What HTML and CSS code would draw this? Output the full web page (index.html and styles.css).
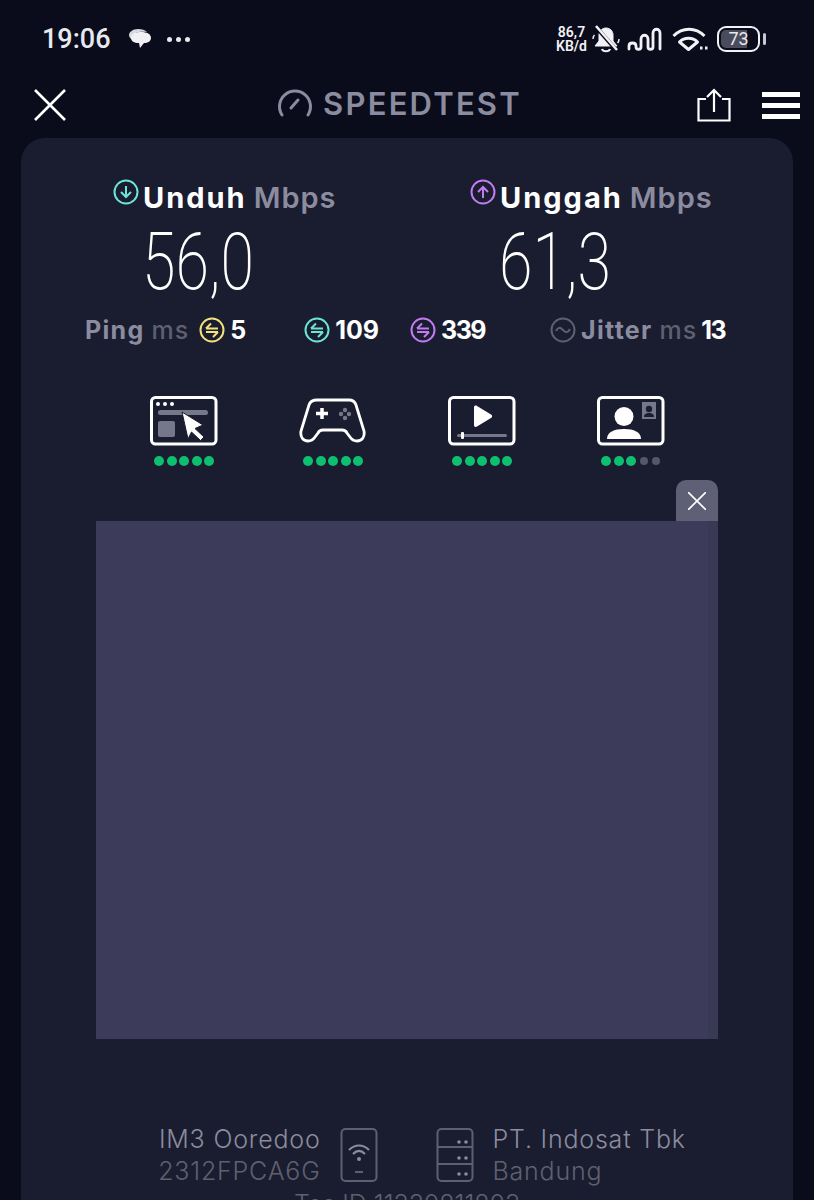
FILE: index.html
```html
<!DOCTYPE html>
<html lang="en">
<head>
    <meta charset="UTF-8">
    <title>Speedtest</title>
    <link rel="stylesheet" href="styles.css">
</head>
<body>
    <div class="status_bar">
        <div class="status_left">
            <span class="clock">19:06</span>
            <svg width="24" height="22" viewBox="0 0 24 22"><path d="M1 7c0-3 4-6 9-6 4 0 7 1 9 3-6-1-13 0-13 4 0 2 1 3 2 4-4 0-7-2-7-5z" fill="#d8d8e0"/><path d="M3 10c0-4 4-6 10-6s10 2 10 6c0 3-3 5-7 5l-4 5-1-5c-5 0-8-2-8-5z" fill="#f0f0f5"/></svg>
            <span class="status_dots"><i></i><i></i><i></i></span>
        </div>
        <div class="status_right">
            <span class="net_speed">86,7<br>KB/d</span>
            <svg width="28" height="28" viewBox="0 0 28 28" fill="none" stroke="#f2f2f6" stroke-width="2"><path d="M7 9c1-4 4-6 7-6 4 0 7 3 7 7v6l4 5H3l4-5z" fill="#f2f2f6" stroke-width="1"/><path d="M10 24c1 3 7 3 8 0" stroke-width="2.200"/><path d="M1 14c0-2 .5-3 1.500-4M27 14c0 2-.5 3-1.500 4" stroke-width="1.500"/><path d="M4 2l21 24" stroke="#0a0c1b" stroke-width="4"/><path d="M4 1l21 24" stroke-width="2.500"/></svg>
            <svg class="signal" width="35" height="25" viewBox="0 0 35 25" fill="none" stroke="#f2f2f6" stroke-width="2.800" stroke-linecap="round" stroke-linejoin="round"><path d="M2 22v-3c0-4 7-4 7 0v1c0 3 5 3 5 0v-8c0-5 7-5 7 0v8c0 3 5 3 5 0V6c0-5 7-5 7 0v16"/></svg>
            <svg class="wifi" width="37" height="26" viewBox="0 0 37 26" fill="none" stroke="#f2f2f6" stroke-width="3" stroke-linejoin="round"><path d="M1.500 10c9-9 22-9 31 0"/><path d="M7.500 16c5-5 13-5 18 0l-9 7.500z"/><path d="M28 22h2.500M33 22h2.500" stroke-width="3"/></svg>
            <span class="battery"><span class="battery_level">73</span></span>
            <span class="battery_tip"></span>
        </div>
    </div>

    <div class="top_bar">
        <svg width="34" height="34" viewBox="0 0 34 34" stroke="#fff" stroke-width="2.600"><path d="M2 2l30 30M32 2L2 32"/></svg>
        <div class="brand">
            <svg width="36" height="30" viewBox="0 0 36 30" fill="none" stroke="#8b8c9f" stroke-width="3" stroke-linecap="round"><path d="M5 27a15.500 15.500 0 1 1 26 0"/><path d="M14 20l7-8"/></svg>
            <span>SPEEDTEST</span>
        </div>
        <div class="top_actions">
            <svg width="34" height="34" viewBox="0 0 34 34" fill="none" stroke="#fff" stroke-width="2.200"><path d="M9 11H1.500v21.500h31V11H25"/><path d="M17 24V2M10 9l7-7 7 7"/></svg>
            <div class="burger"><i></i><i></i><i></i></div>
        </div>
    </div>

    <main class="card">
        <div class="speeds">
            <div class="speed">
                <div class="speed_label">
                    <svg class="badge" width="26" height="26" viewBox="0 0 26 26" fill="none" stroke="#6ce5d8" stroke-width="2"><circle cx="13" cy="13" r="11.500"/><path d="M13 7v11M8 13l5 5 5-5"/></svg>
                    <b>Unduh</b><span>Mbps</span>
                </div>
                <div class="speed_value">56,0</div>
            </div>
            <div class="speed">
                <div class="speed_label">
                    <svg class="badge" width="26" height="26" viewBox="0 0 26 26" fill="none" stroke="#c07cf0" stroke-width="2"><circle cx="13" cy="13" r="11.500"/><path d="M13 19V8M8 13l5-5 5 5"/></svg>
                    <b>Unggah</b><span>Mbps</span>
                </div>
                <div class="speed_value">61,3</div>
            </div>
        </div>

        <div class="latency">
            <div class="lat_item lat_ping">
                <b class="dim">Ping</b><span class="dim2">ms</span>
                <svg width="26" height="26" viewBox="0 0 26 26" fill="none" stroke="#f3e27a" stroke-width="2"><circle cx="13" cy="13" r="11.500"/><path d="M7 11.500h12M7 11.500l5-5M19 15H7M19 15l-5 5"/></svg>
                <b>5</b>
            </div>
            <div class="lat_item lat_down">
                <svg width="26" height="26" viewBox="0 0 26 26" fill="none" stroke="#6ce5d8" stroke-width="2"><circle cx="13" cy="13" r="11.500"/><path d="M7 11.500h12M7 11.500l5-5M19 15H7M19 15l-5 5"/></svg>
                <b>109</b>
            </div>
            <div class="lat_item lat_up">
                <svg width="26" height="26" viewBox="0 0 26 26" fill="none" stroke="#c07cf0" stroke-width="2"><circle cx="13" cy="13" r="11.500"/><path d="M7 11.500h12M7 11.500l5-5M19 15H7M19 15l-5 5"/></svg>
                <b class="tight">339</b>
            </div>
            <div class="lat_item lat_jitter">
                <svg width="26" height="26" viewBox="0 0 26 26" fill="none" stroke="#5f606f" stroke-width="2"><circle cx="13" cy="13" r="11.500"/><path d="M6 14c2-4 4-4 7-1s5 3 7-1"/></svg>
                <b class="dim">Jitter</b><span class="dim2">ms</span><b class="tight jitter_value">13</b>
            </div>
        </div>

        <div class="ratings">
            <div class="rating">
                <svg width="68" height="50" viewBox="0 0 68 50" fill="none"><rect x="1.500" y="1.500" width="64.500" height="46.500" rx="4" stroke="#fff" stroke-width="3"/><circle cx="8" cy="8" r="2" fill="#fff"/><circle cx="15" cy="8" r="2" fill="#fff"/><circle cx="22" cy="8" r="2" fill="#fff"/><rect x="8" y="14" width="50" height="5" rx="2.500" fill="#77778a"/><rect x="8" y="25" width="17" height="16" rx="2" fill="#77778a"/><path d="M32 16l21 13-8 3.500 9 8.500-3.500 3.500-9-8.500-3.500 7z" fill="#fff" stroke="#1a1c30" stroke-width="1"/></svg>
                <div class="dots"><i></i><i></i><i></i><i></i><i></i></div>
            </div>
            <div class="rating">
                <svg width="68" height="50" viewBox="0 0 68 50" fill="none"><path d="M18 4h32c4 0 6 2 7 5l8 26c1 6-2 10-7 10-3 0-5-1-7-4l-3-4c-1-2-3-3-5-3H24c-2 0-4 1-5 3l-3 4c-2 3-4 4-7 4-5 0-8-4-7-10l8-26c1-3 3-5 8-5z" stroke="#fff" stroke-width="2.800"/><path d="M17 17.500h12M23 12v11" stroke="#fff" stroke-width="3.500"/><g fill="#77778a"><circle cx="46" cy="14" r="2.200"/><circle cx="46" cy="22" r="2.200"/><circle cx="42" cy="18" r="2.200"/><circle cx="50" cy="18" r="2.200"/></g></svg>
                <div class="dots"><i></i><i></i><i></i><i></i><i></i></div>
            </div>
            <div class="rating">
                <svg width="68" height="50" viewBox="0 0 68 50" fill="none"><rect x="1.500" y="1.500" width="64.500" height="46.500" rx="4" stroke="#fff" stroke-width="3"/><path d="M26 11c0-1 1.500-2 3-1l14 8.500c1.500 1 1.500 2.500 0 3.500l-14 8.500c-1.500 1-3 0-3-1z" fill="#fff"/><rect x="9" y="38" width="50" height="3" rx="1.500" fill="#77778a"/><rect x="13" y="36" width="3" height="7" rx="1" fill="#fff"/></svg>
                <div class="dots"><i></i><i></i><i></i><i></i><i></i></div>
            </div>
            <div class="rating">
                <svg width="68" height="50" viewBox="0 0 68 50" fill="none"><rect x="1.500" y="1.500" width="64.500" height="46.500" rx="4" stroke="#fff" stroke-width="3"/><circle cx="27" cy="20.500" r="9.500" fill="#fff"/><path d="M10 43c0-7 7-10 17-10s17 3 17 10z" fill="#fff"/><rect x="45" y="6" width="14" height="17" fill="#77778a"/><circle cx="52" cy="13" r="3.200" fill="#1a1c30"/><path d="M47 21c0-3 2-4 5-4s5 1 5 4z" fill="#1a1c30"/></svg>
                <div class="dots"><i></i><i></i><i></i><i class="off"></i><i class="off"></i></div>
            </div>
        </div>

        <div class="ad">
            <button class="ad_close"><svg width="18" height="18" viewBox="0 0 18 18" stroke="#fff" stroke-width="1.600"><path d="M0 0l18 18M18 0L0 18"/></svg></button>
            <div class="ad_box"></div>
        </div>

        <div class="server_info">
            <div class="info_text info_right">
                <div class="info_main">IM3 Ooredoo</div>
                <div class="info_sub">2312FPCA6G</div>
            </div>
            <svg width="38" height="56" viewBox="0 0 38 56" fill="none" stroke="#5f606f" stroke-width="2"><rect x="1.500" y="2" width="35" height="52" rx="4"/><path d="M9 23c6-6 14-6 20 0M13 27c4-4 8-4 12 0" stroke="#8b8c9f" stroke-width="2.200"/><circle cx="19" cy="32" r="2" fill="#8b8c9f" stroke="none"/><path d="M15 45h8"/></svg>
            <svg class="server_icon" width="38" height="56" viewBox="0 0 38 56" fill="none" stroke="#5f606f" stroke-width="2"><rect x="1.500" y="2" width="35" height="52" rx="4"/><path d="M2 20h34M2 37h34"/><g fill="#8b8c9f" stroke="none"><circle cx="23" cy="15" r="1.800"/><circle cx="30" cy="15" r="1.800"/><circle cx="23" cy="31" r="1.800"/><circle cx="30" cy="31" r="1.800"/><circle cx="23" cy="47" r="1.800"/><circle cx="30" cy="47" r="1.800"/></g></svg>
            <div class="info_text">
                <div class="info_main">PT. Indosat Tbk</div>
                <div class="info_sub">Bandung</div>
            </div>
        </div>
        <div class="test_id">Tes ID 11330811803</div>
    </main>
</body>
</html>
```

FILE: styles.css
```css
*,
*::before,
*::after{
    padding: 0;
    margin: 0;
    box-sizing: border-box;
}

html, body{
    height: 1200px;
    overflow: hidden;
}

body{
    background: #0a0c1b;
    font-family: "Inter", "Open Sans", sans-serif;
    color: #fff;
}

svg{
    display: block;
    flex-shrink: 0;
}

.status_bar{
    height: 74px;
    padding: 4px 48px 0 42px;
    display: flex;
    justify-content: space-between;
    align-items: center;
}

.status_left{
    display: flex;
    align-items: center;
    gap: 8px;
}

.clock{
    font: 500 27px "Roboto", sans-serif;
    color: #e8e8ee;
    margin-right: 9px;
}

.status_dots{
    display: flex;
    gap: 4px;
    margin-left: 7px;
}

.status_dots i{
    width: 5px;
    height: 5px;
    border-radius: 50%;
    background: #e8e8ee;
}

.status_right{
    display: flex;
    align-items: center;
    gap: 5px;
}

.net_speed{
    font: 600 14px/14px "Roboto", sans-serif;
    color: #f2f2f6;
    text-align: center;
}

.signal{
    margin-left: 2px;
}

.wifi{
    margin-left: 5px;
}

.battery{
    width: 43px;
    height: 26px;
    border: 2.500px solid #f2f2f6;
    border-radius: 9px;
    padding: 2px;
    margin-left: 3px;
    display: flex;
}

.battery_level{
    width: 100%;
    border-radius: 5px 2px 2px 5px;
    background: linear-gradient(to right, #4a4b5c 73%, transparent 73%);
    font: 400 18px/18px "Roboto", sans-serif;
    color: #e8e8ee;
    text-align: center;
}

.battery_tip{
    width: 3px;
    height: 12px;
    background: #c8c8d0;
    border-radius: 2px;
    margin-left: -2px;
}

.top_bar{
    height: 62px;
    padding: 0 14px 0 33px;
    display: flex;
    align-items: center;
    justify-content: space-between;
}

.brand{
    display: flex;
    align-items: center;
    gap: 10px;
    font-size: 31px;
    font-weight: 600;
    color: #8b8c9f;
    letter-spacing: 2.200px;
    margin: -4px 0 0 35px;
}

.top_actions{
    display: flex;
    align-items: center;
    gap: 31px;
}

.burger{
    display: flex;
    flex-direction: column;
    gap: 6px;
}

.burger i{
    display: block;
    width: 38px;
    height: 5px;
    background: #fff;
}

.card{
    margin: 2px 21px 0;
    height: 1100px;
    background: #1a1c30;
    border-radius: 24px 24px 0 0;
    padding-top: 41px;
}

.speeds{
    display: flex;
    padding-left: 92px;
}

.speed{
    width: 357px;
    flex-shrink: 0;
}

.speed_label{
    display: flex;
    align-items: center;
    height: 36px;
    font-size: 29px;
}

.speed_label .badge{
    margin-top: -10px;
    margin-right: 4px;
}

.speed_label b{
    font-weight: 700;
    margin-right: 7px;
    letter-spacing: 2px;
}

.speed_label span{
    font-weight: 600;
    letter-spacing: 1px;
    color: #8b8c9f;
}

.speed_value{
    font: 200 80px/80px "Roboto", sans-serif;
    transform: scaleX(.76);
    transform-origin: left center;
    margin-left: 29px;
    margin-top: 7px;
}

.latency{
    display: flex;
    align-items: center;
    height: 40px;
    margin-top: 8px;
    padding-left: 64px;
    font-size: 25px;
}

.lat_item{
    display: flex;
    align-items: center;
    gap: 5px;
}

.lat_item b{
    font-weight: 700;
}

.lat_item b.dim{
    color: #8b8c9f;
    letter-spacing: 1.300px;
}

.lat_item b.tight{
    letter-spacing: -1.500px;
}

.dim2{
    color: #5f606f;
    font-weight: 500;
    margin: 0 5px 0 2px;
    letter-spacing: 1px;
}

.jitter_value{
    margin-left: -6px;
}

.lat_down{
    margin-left: 58px;
}

.lat_up{
    margin-left: 31px;
}

.lat_jitter{
    margin-left: 65px;
}

.ratings{
    display: flex;
    padding-left: 129px;
    gap: 81px;
    margin-top: 46px;
}

.rating{
    width: 68px;
    display: flex;
    flex-direction: column;
    align-items: center;
    gap: 10px;
}

.dots{
    display: flex;
    align-items: center;
    gap: 2.500px;
}

.dots i{
    width: 10px;
    height: 10px;
    border-radius: 50%;
    background: #0fbf70;
}

.dots i.off{
    width: 8px;
    height: 8px;
    margin: 0 1px;
    background: #55566a;
}

.ad{
    margin: 14px 75px 0;
    display: flex;
    flex-direction: column;
    align-items: flex-end;
}

.ad_close{
    width: 42px;
    height: 41px;
    background: #5f6075;
    border: none;
    border-radius: 10px 10px 0 0;
    display: flex;
    align-items: center;
    justify-content: center;
}

.ad_box{
    width: 100%;
    height: 518px;
    background: linear-gradient(to right, #3c3b5a 98.400%, #393855 98.400%);
}

.server_info{
    display: flex;
    align-items: center;
    justify-content: center;
    margin-top: 84px;
    padding-left: 30px;
    gap: 19px;
    font-size: 25px;
    font-weight: 300;
    line-height: 32px;
    letter-spacing: .8px;
}

.server_icon{
    margin-left: 39px;
}

.info_right{
    text-align: right;
}

.info_main{
    color: #8b8c9f;
}

.info_sub{
    color: #5f606f;
}

.test_id{
    text-align: center;
    font-size: 25px;
    font-weight: 300;
    color: #5f606f;
    margin-top: 2px;
}
```
